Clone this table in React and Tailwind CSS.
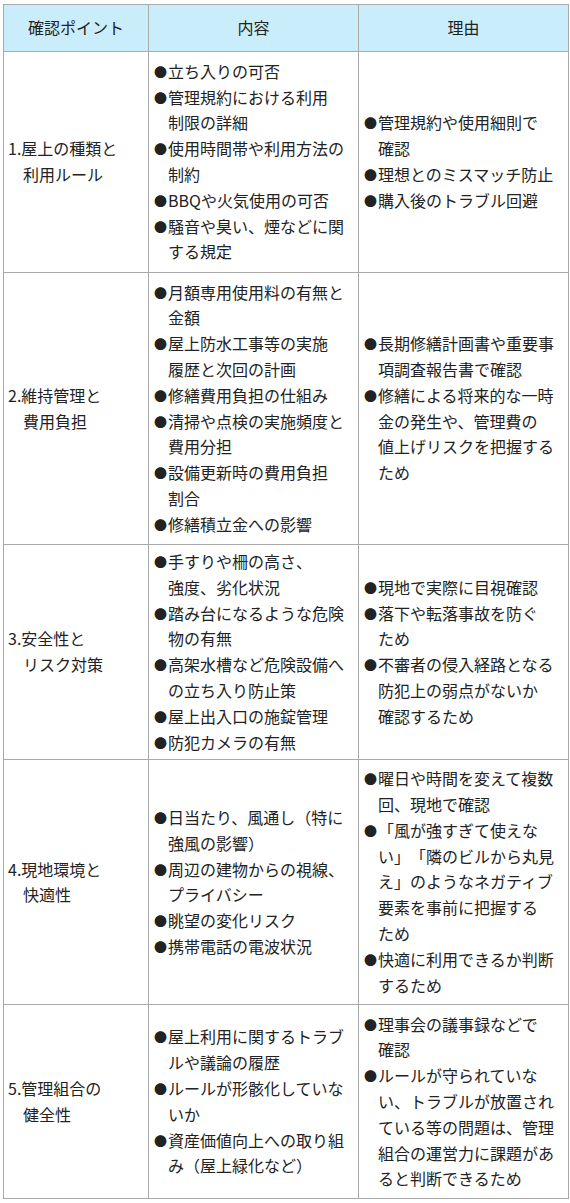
const rows = [
  {
    h: "h-[221px]",
    point: ["1.屋上の種類と", "利用ルール"],
    content: [
      ["立ち入りの可否"],
      ["管理規約における利用", "制限の詳細"],
      ["使用時間帯や利用方法の", "制約"],
      ["BBQや火気使用の可否"],
      ["騒音や臭い、煙などに関", "する規定"],
    ],
    reason: [
      ["管理規約や使用細則で", "確認"],
      ["理想とのミスマッチ防止"],
      ["購入後のトラブル回避"],
    ],
  },
  {
    h: "h-[272px]",
    point: ["2.維持管理と", "費用負担"],
    content: [
      ["月額専用使用料の有無と", "金額"],
      ["屋上防水工事等の実施", "履歴と次回の計画"],
      ["修繕費用負担の仕組み"],
      ["清掃や点検の実施頻度と", "費用分担"],
      ["設備更新時の費用負担", "割合"],
      ["修繕積立金への影響"],
    ],
    reason: [
      ["長期修繕計画書や重要事", "項調査報告書で確認"],
      ["修繕による将来的な一時", "金の発生や、管理費の", "値上げリスクを把握する", "ため"],
    ],
  },
  {
    h: "h-[215px]",
    point: ["3.安全性と", "リスク対策"],
    content: [
      ["手すりや柵の高さ、", "強度、劣化状況"],
      ["踏み台になるような危険", "物の有無"],
      ["高架水槽など危険設備へ", "の立ち入り防止策"],
      ["屋上出入口の施錠管理"],
      ["防犯カメラの有無"],
    ],
    reason: [
      ["現地で実際に目視確認"],
      ["落下や転落事故を防ぐ", "ため"],
      ["不審者の侵入経路となる", "防犯上の弱点がないか", "確認するため"],
    ],
  },
  {
    h: "h-[245px]",
    point: ["4.現地環境と", "快適性"],
    content: [
      ["日当たり、風通し（特に", "強風の影響）"],
      ["周辺の建物からの視線、", "プライバシー"],
      ["眺望の変化リスク"],
      ["携帯電話の電波状況"],
    ],
    reason: [
      ["曜日や時間を変えて複数", "回、現地で確認"],
      ["「風が強すぎて使えな", "い」「隣のビルから丸見", "え」のようなネガティブ", "要素を事前に把握する", "ため"],
      ["快適に利用できるか判断", "するため"],
    ],
  },
  {
    h: "h-[194px]",
    point: ["5.管理組合の", "健全性"],
    content: [
      ["屋上利用に関するトラブ", "ルや議論の履歴"],
      ["ルールが形骸化していな", "いか"],
      ["資産価値向上への取り組", "み（屋上緑化など）"],
    ],
    reason: [
      ["理事会の議事録などで", "確認"],
      ["ルールが守られていな", "い、トラブルが放置され", "ている等の問題は、管理", "組合の運営力に課題があ", "ると判断できるため"],
    ],
  },
];

const BulletList = ({ items }) => (
  <div className="flex flex-col">
    {items.map((lines, i) => (
      <div key={i} className="flex">
        <span className="w-[14px] shrink-0 text-[13px] -ml-[1px]">●</span>
        <div className="whitespace-nowrap">
          {lines.map((l, j) => (
            <div key={j}>{l}</div>
          ))}
        </div>
      </div>
    ))}
  </div>
);

export default function App() {
  return (
    <div
      className="bg-white min-h-[1203px] pl-[3px] pt-[4px] text-[#222] text-[16px] leading-[25.8px] [text-spacing-trim:space-all]"
      style={{ fontFamily: '"Noto Sans CJK JP", "Noto Sans", sans-serif' }}
    >
      <table className="table-fixed border-collapse w-[565px]">
        <colgroup>
          <col className="w-[145px]" />
          <col className="w-[210px]" />
          <col className="w-[210px]" />
        </colgroup>
        <thead>
          <tr className="bg-[#caedfb] h-[47px]">
            <th className="border border-[#a9a9a9] font-normal text-center">確認ポイント</th>
            <th className="border border-[#a9a9a9] font-normal text-center">内容</th>
            <th className="border border-[#a9a9a9] font-normal text-center">理由</th>
          </tr>
        </thead>
        <tbody>
          {rows.map((r, i) => (
            <tr key={i} className={r.h}>
              <td className="border border-[#a9a9a9] align-middle pl-[4px] py-[5px] whitespace-nowrap">
                <div>{r.point[0]}</div>
                <div className="pl-[15px]">{r.point[1]}</div>
              </td>
              <td className="border border-[#a9a9a9] align-middle pl-[6px] pr-[4px] py-[4px]">
                <BulletList items={r.content} />
              </td>
              <td className="border border-[#a9a9a9] align-middle pl-[6px] pr-[4px] py-[4px]">
                <BulletList items={r.reason} />
              </td>
            </tr>
          ))}
        </tbody>
      </table>
    </div>
  );
}
